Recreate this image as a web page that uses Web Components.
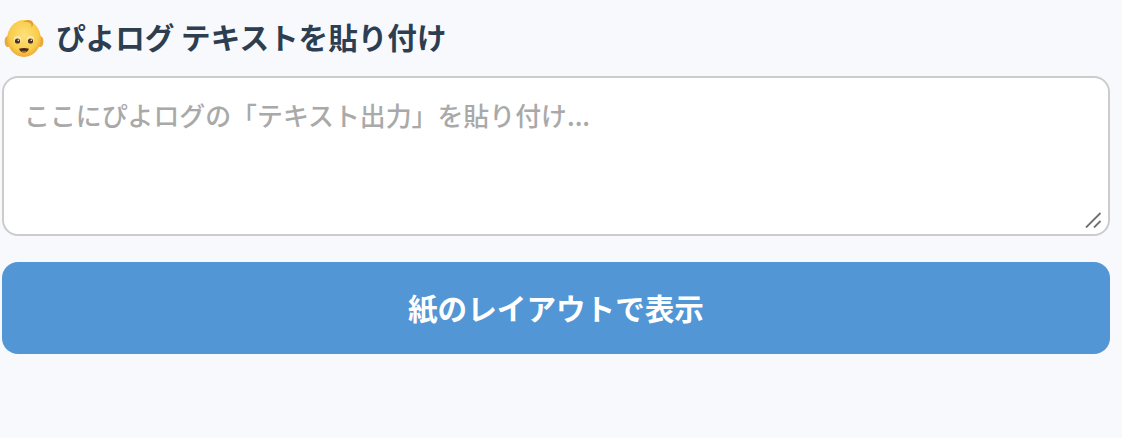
<!DOCTYPE html>
<html lang="ja"><head><meta charset="utf-8"><style>
html,body{margin:0;padding:0;background:#f8f9fd;}
body{height:438px;overflow:hidden;font-family:"Noto Sans CJK JP","Noto Sans",sans-serif;}
</style></head><body>
<paste-panel></paste-panel>
<script>
class BabyIcon extends HTMLElement{constructor(){super();this.attachShadow({mode:'open'}).innerHTML=`<style>:host{display:block;width:42px;height:42px;flex:none}svg{display:block}</style>
<svg width="42" height="42" viewBox="0 0 42 42"><defs><radialGradient id="f" cx="50%" cy="42%" r="58%"><stop offset="0" stop-color="#fee07a"/><stop offset=".72" stop-color="#f9cd4c"/><stop offset="1" stop-color="#eeaa33"/></radialGradient></defs>
<ellipse cx="5.800" cy="24.500" rx="3.200" ry="5.500" fill="#eaa93c"/><ellipse cx="38.200" cy="24.500" rx="3.200" ry="5.500" fill="#eaa93c"/>
<ellipse cx="22" cy="21.500" rx="16.800" ry="18.500" fill="url(#f)"/>
<path d="M21 5.500C23 3 27 2 29.500 3.800C32 5.700 31.500 9 29.300 10.300C30 8 29 6 26.800 5.400C24.500 4.900 22.800 5.100 21 5.500Z" fill="#e0a033"/>
<ellipse cx="15.500" cy="22.500" rx="3.800" ry="3.400" fill="#fdeeb8" opacity=".75"/><ellipse cx="28.500" cy="22.500" rx="3.800" ry="3.400" fill="#fdeeb8" opacity=".75"/>
<circle cx="15.500" cy="24" r="2.600" fill="#4b3320"/><circle cx="28.500" cy="24" r="2.600" fill="#4b3320"/><circle cx="16.300" cy="23.200" r=".8" fill="#fff"/><circle cx="29.300" cy="23.200" r=".8" fill="#fff"/>
<path d="M17 31.800Q22 30.300 27 31.800Q25.700 35.500 22 35.500Q18.300 35.500 17 31.800Z" fill="#4a2a1a"/><path d="M19 34.200Q22 33.100 25 34.200Q23.700 35.500 22 35.500Q20.300 35.500 19 34.200Z" fill="#c9603c"/></svg>`}}
customElements.define('baby-icon',BabyIcon);
class PastePanel extends HTMLElement{constructor(){super();this.attachShadow({mode:'open'}).innerHTML=`<style>
:host{display:flex;flex-direction:column;padding:16px 12px 0 2px;box-sizing:border-box;width:1122px}
h2{margin:0;display:flex;align-items:center;gap:12px;height:44px;font:700 29.6px/44px "Noto Sans CJK JP",sans-serif;color:#2c3e50}
h2 span{margin-top:-2px}
.field{position:relative;height:160px;margin:16px 0 26px}
textarea{display:block;box-sizing:border-box;width:1108px;height:160px;margin:0;padding:19px 20px 21px;border:2px solid #ccc;border-radius:16px;background:#fff;font:500 25.9px/1.4 "Noto Sans CJK JP",sans-serif;outline:none;resize:none}
textarea::placeholder{color:#a9a9a9;opacity:1}
.grip{position:absolute;right:8px;bottom:8px;display:block}
button{display:block;width:1108px;height:92px;border:0;border-radius:16px;background:#5296d5;color:#fff;font:700 29.6px "Noto Sans CJK JP",sans-serif;padding:0 0 2px}
</style><h2><baby-icon></baby-icon><span>ぴよログ テキストを貼り付け</span></h2>
<div class="field"><textarea placeholder="ここにぴよログの「テキスト出力」を貼り付け..."></textarea>
<svg class="grip" width="17" height="16" viewBox="0 0 17 16"><path d="M1 15.500L15.500 1M9 15.500L15.500 9" stroke="#6f6f6f" stroke-width="1.800" fill="none"/></svg></div>
<button>紙のレイアウトで表示</button>`}}
customElements.define('paste-panel',PastePanel);
</script></body></html>
